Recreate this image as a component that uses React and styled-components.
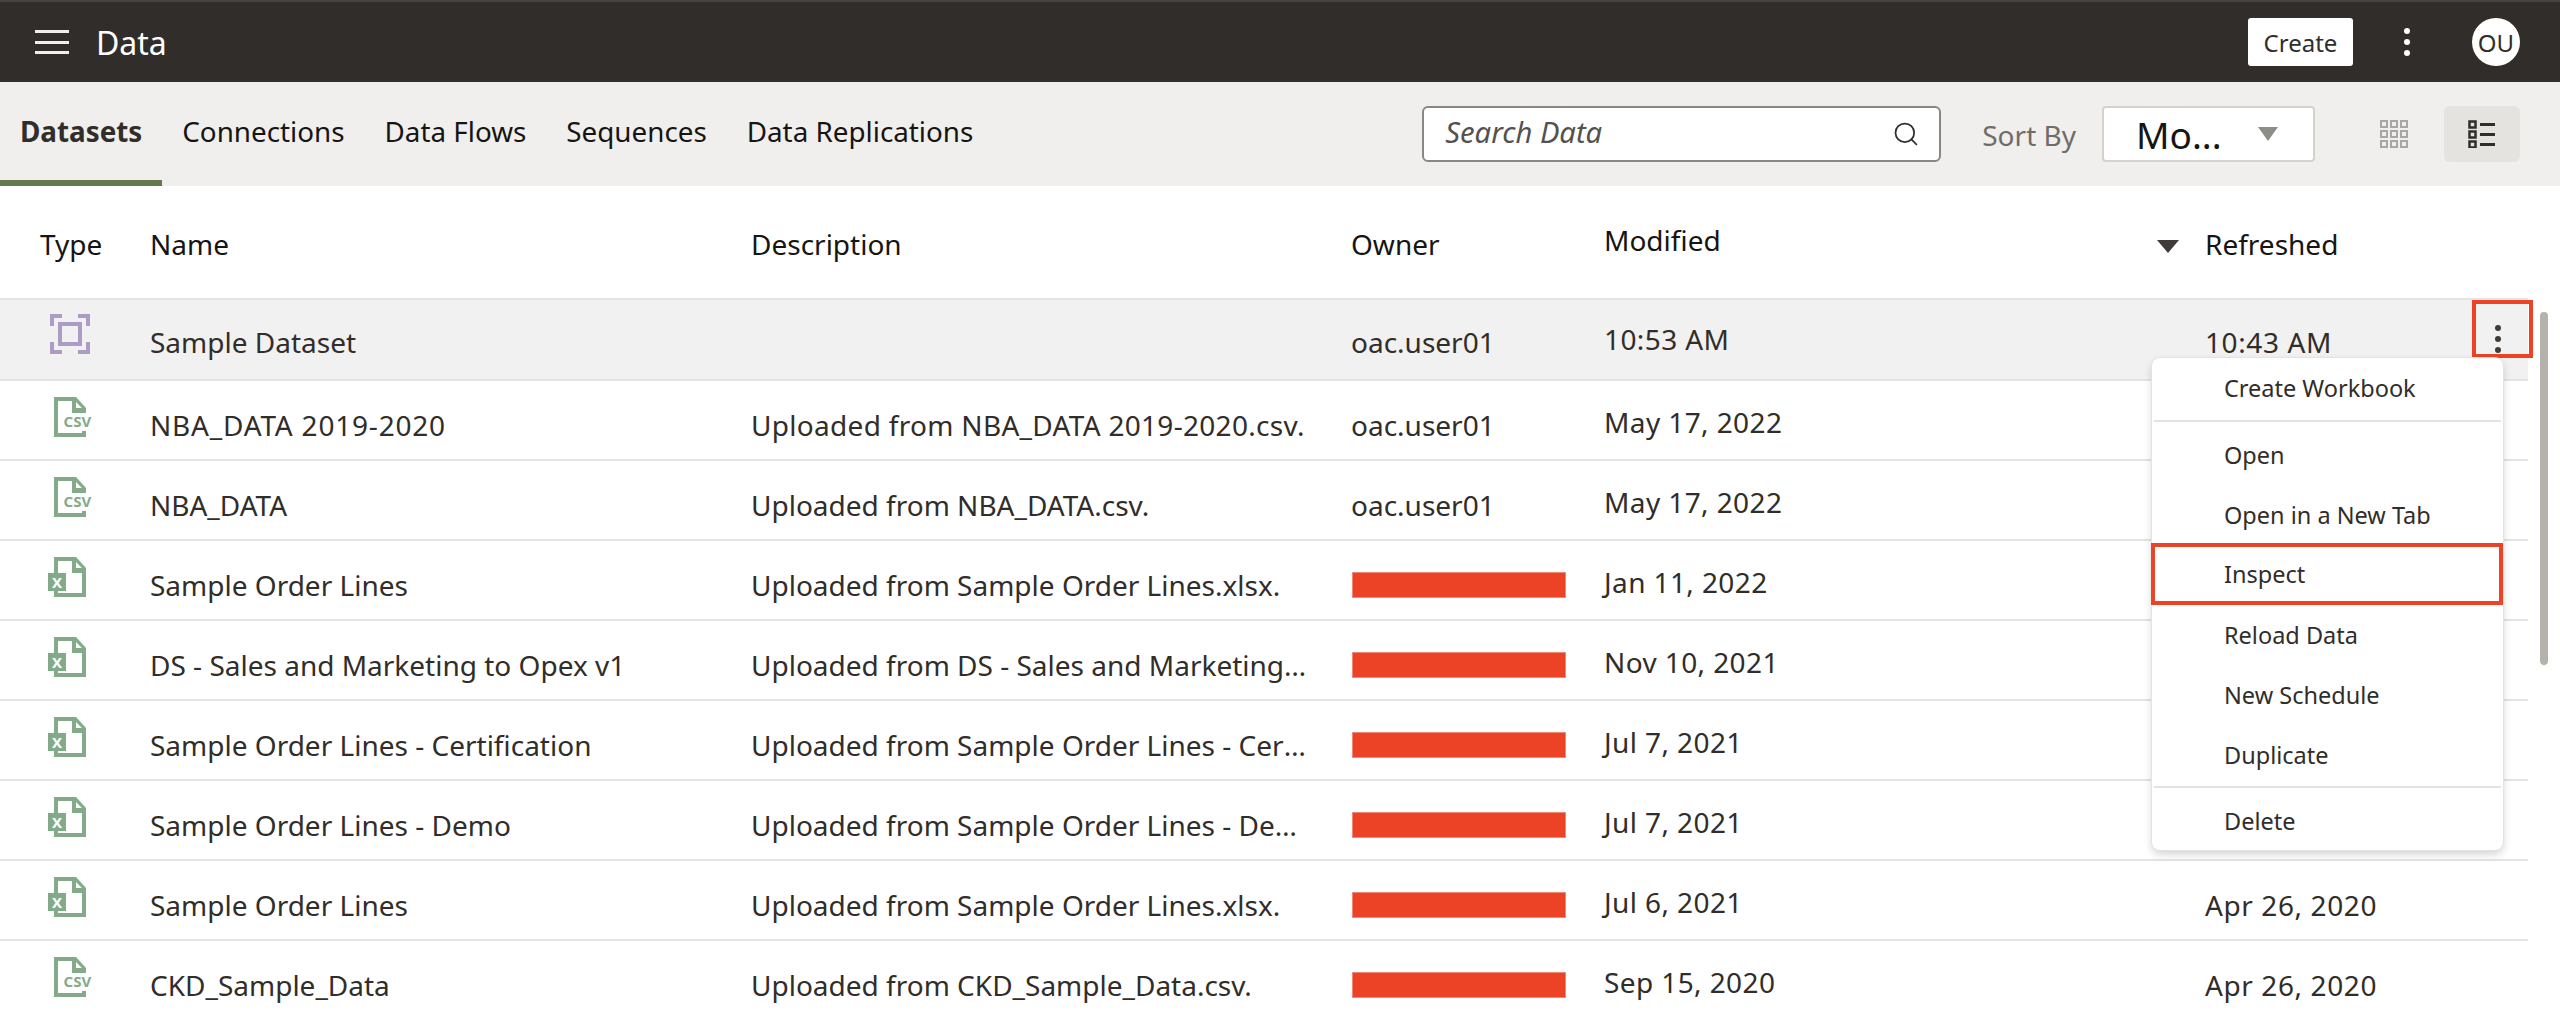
import React from "react";
import styled, { createGlobalStyle } from "styled-components";
import { Search } from "lucide-react";

const tabs = ["Datasets", "Connections", "Data Flows", "Sequences", "Data Replications"];

const rows = [
  { type: "dataset", name: "Sample Dataset", description: "", owner: "oac.user01", modified: "10:53 AM", refreshed: "10:43 AM", selected: true },
  { type: "csv", name: "NBA_DATA 2019-2020", description: "Uploaded from NBA_DATA 2019-2020.csv.", owner: "oac.user01", modified: "May 17, 2022", wide: true },
  { type: "csv", name: "NBA_DATA", description: "Uploaded from NBA_DATA.csv.", owner: "oac.user01", modified: "May 17, 2022" },
  { type: "xlsx", name: "Sample Order Lines", description: "Uploaded from Sample Order Lines.xlsx.", modified: "Jan 11, 2022" },
  { type: "xlsx", name: "DS - Sales and Marketing to Opex v1", description: "Uploaded from DS - Sales and Marketing to Opex v1.xlsx.", modified: "Nov 10, 2021" },
  { type: "xlsx", name: "Sample Order Lines - Certification", description: "Uploaded from Sample Order Lines - Certification.xlsx.", modified: "Jul 7, 2021" },
  { type: "xlsx", name: "Sample Order Lines - Demo", description: "Uploaded from Sample Order Lines - Demo.xlsx.", modified: "Jul 7, 2021" },
  { type: "xlsx", name: "Sample Order Lines", description: "Uploaded from Sample Order Lines.xlsx.", modified: "Jul 6, 2021", refreshed: "Apr 26, 2020" },
  { type: "csv", name: "CKD_Sample_Data", description: "Uploaded from CKD_Sample_Data.csv.", modified: "Sep 15, 2020", refreshed: "Apr 26, 2020" },
];

const menuGroups = [
  ["Create Workbook"],
  ["Open", "Open in a New Tab", "Inspect", "Reload Data", "New Schedule", "Duplicate"],
  ["Delete"],
];

const DatasetIcon = () => (
  <svg width="40" height="40" viewBox="0 0 40 40" fill="none" stroke="#ad9bc6" strokeWidth="4">
    <path d="M12 2H2V12M28 2H38V12M2 28V38H12M38 28V38H28" />
    <rect x="10" y="10" width="20" height="20" />
  </svg>
);

const CsvIcon = () => (
  <svg width="40" height="40" viewBox="-4 0 40 40" overflow="visible">
    <path
      fillRule="evenodd"
      fill="#83ab8a"
      d="M0 0H22L32 11V16H18V4H4V36H28V34H32V40H0ZM22 5V11H28Z"
    />
    <text x="9.5" y="30" fontSize="15" fontWeight="700" fill="#83ab8a" fontFamily="Noto Sans, sans-serif">
      CSV
    </text>
  </svg>
);

const XlsxIcon = () => (
  <svg width="40" height="40" viewBox="2 0 40 40" overflow="visible">
    <path
      fillRule="evenodd"
      fill="#83ab8a"
      d="M6 0H28L38 11V40H6V34H10V36H34V16H24V4H10V16H6ZM28 5V11H34Z"
    />
    <rect x="0" y="16" width="18" height="18" fill="#83ab8a" />
    <text x="9" y="30.5" fontSize="15" fontWeight="700" fill="#fff" textAnchor="middle" fontFamily="Noto Sans, sans-serif">
      X
    </text>
  </svg>
);

const typeIcons = { dataset: DatasetIcon, csv: CsvIcon, xlsx: XlsxIcon };

const GridIcon = () => (
  <svg width="28" height="28" viewBox="0 0 28 28" fill="none" stroke="#a9a7a3" strokeWidth="2">
    {[0, 10, 20].map((y) =>
      [0, 10, 20].map((x) => <rect key={`${x}-${y}`} x={x + 1} y={y + 1} width="6" height="6" />)
    )}
  </svg>
);

const ListIcon = () => (
  <svg width="28" height="28" viewBox="0 0 28 28" fill="none" stroke="#312d2a" strokeWidth="2.5">
    {[1, 11, 21].map((y) => (
      <React.Fragment key={y}>
        <rect x="1.5" y={y + 0.5} width="6" height="6" />
        <path d={`M12 ${y + 3.5}H27`} strokeWidth="3" />
      </React.Fragment>
    ))}
  </svg>
);

const Kebab = ({ color }) => (
  <svg width="8" height="30" viewBox="0 0 8 30" fill={color}>
    <circle cx="4" cy="4" r="3" />
    <circle cx="4" cy="15" r="3" />
    <circle cx="4" cy="26" r="3" />
  </svg>
);

export default function App() {
  return (
    <Page>
      <GlobalStyle />
      <Header>
        <Hamburger>
          <span />
          <span />
          <span />
        </Hamburger>
        <PageTitle>Data</PageTitle>
        <CreateButton>Create</CreateButton>
        <HeaderKebab>
          <Kebab color="#fff" />
        </HeaderKebab>
        <Avatar>OU</Avatar>
      </Header>

      <TabBar>
        <Tabs>
          {tabs.map((tab, index) => (
            <Tab key={tab} $active={index === 0}>
              {tab}
            </Tab>
          ))}
        </Tabs>
        <SearchBox>
          <SearchText>Search Data</SearchText>
          <Search size={28} strokeWidth={1.5} color="#312d2a" />
        </SearchBox>
        <SortLabel>Sort By</SortLabel>
        <SortSelect>
          <SortValue>Mo...</SortValue>
          <SortArrow />
        </SortSelect>
        <ViewButton>
          <GridIcon />
        </ViewButton>
        <ViewButton $active>
          <ListIcon />
        </ViewButton>
      </TabBar>

      <Content>
        <Table>
          <HeadRow>
            <HeadCell>Type</HeadCell>
            <HeadCell>Name</HeadCell>
            <HeadCell>Description</HeadCell>
            <HeadCell>Owner</HeadCell>
            <HeadCell $raised>
              Modified
              <SortMark />
            </HeadCell>
            <HeadCell>Refreshed</HeadCell>
          </HeadRow>
          {rows.map((row, index) => {
            const Icon = typeIcons[row.type];
            return (
              <Row key={index} $selected={row.selected}>
                <IconCell>
                  <Icon />
                </IconCell>
                <Cell $tracking={row.wide ? 0.8 : 0}>{row.name}</Cell>
                <Cell $tracking={row.wide ? 0.3 : 0}>
                  <Ellipsis>{row.description}</Ellipsis>
                </Cell>
                <Cell>{row.owner ? row.owner : <Redaction />}</Cell>
                <Cell $raised $tracking={0.4}>
                  {row.modified}
                </Cell>
                <Cell $tracking={0.6}>{row.refreshed}</Cell>
                {row.selected && (
                  <RowAction>
                    <Kebab color="#3f3b38" />
                  </RowAction>
                )}
              </Row>
            );
          })}
          <Menu>
            {menuGroups.map((group, index) => (
              <MenuGroup key={index} $first={index === 0}>
                {group.map((item) => (
                  <MenuItem key={item} $highlighted={item === "Inspect"}>
                    {item}
                  </MenuItem>
                ))}
              </MenuGroup>
            ))}
          </Menu>
        </Table>
        <ScrollTrack>
          <ScrollThumb />
        </ScrollTrack>
      </Content>
    </Page>
  );
}

const GlobalStyle = createGlobalStyle`
  body {
    margin: 0;
    background: #fff;
    font-family: "Noto Sans", "Open Sans", sans-serif;
    color: #312d2a;
  }
`;

const Page = styled.div`
  width: 2560px;
  height: 1018px;
  overflow: hidden;
  display: flex;
  flex-direction: column;
`;

const Header = styled.div`
  height: 80px;
  flex: none;
  border-top: 2px solid #454442;
  background: #312d2a;
  display: flex;
  align-items: center;
  padding: 0 40px 0 35px;
  color: #fff;
`;

const Hamburger = styled.div`
  width: 34px;
  height: 24px;
  display: flex;
  flex-direction: column;
  justify-content: space-between;
  margin-right: 27px;
  span {
    height: 3px;
    background: #f1efed;
  }
`;

const PageTitle = styled.div`
  font-size: 32px;
  flex: 1;
`;

const CreateButton = styled.div`
  width: 105px;
  height: 48px;
  background: #fff;
  color: #312d2a;
  border-radius: 3px;
  font-size: 24px;
  display: flex;
  align-items: center;
  justify-content: center;
`;

const HeaderKebab = styled.div`
  width: 119px;
  padding-right: 12px;
  box-sizing: border-box;
  display: flex;
  justify-content: center;
`;

const Avatar = styled.div`
  width: 48px;
  height: 48px;
  border-radius: 50%;
  background: #fff;
  color: #312d2a;
  font-size: 24px;
  display: flex;
  align-items: center;
  justify-content: center;
`;

const TabBar = styled.div`
  height: 104px;
  flex: none;
  background: #f0efed;
  display: flex;
  align-items: center;
  padding-right: 40px;
`;

const Tabs = styled.div`
  display: flex;
  align-self: stretch;
  flex: 1;
`;

const Tab = styled.div`
  display: flex;
  align-items: center;
  padding: 0 20px 6px;
  font-size: 27.8px;
  font-weight: ${({ $active }) => ($active ? 700 : 400)};
  color: ${({ $active }) => ($active ? "#312d2a" : "#161513")};
  box-shadow: ${({ $active }) => ($active ? "inset 0 -6px 0 #65784f" : "none")};
`;

const SearchBox = styled.div`
  width: 519px;
  height: 56px;
  box-sizing: border-box;
  background: #fff;
  border: 2px solid #8a8782;
  border-radius: 6px;
  padding: 0 19px 0 21px;
  display: flex;
  align-items: center;
  justify-content: space-between;
`;

const SearchText = styled.span`
  font-size: 29.2px;
  font-style: italic;
  color: #54514e;
  margin-bottom: 5px;
`;

const SortLabel = styled.div`
  font-size: 28px;
  color: #6f6c69;
  margin: 2px 26px 0 41px;
`;

const SortSelect = styled.div`
  width: 213px;
  height: 56px;
  box-sizing: border-box;
  background: #fff;
  border: 2px solid #d4d2cd;
  border-radius: 4px;
  padding: 0 35px 0 32px;
  display: flex;
  align-items: center;
  justify-content: space-between;
`;

const SortValue = styled.span`
  font-size: 37px;
  color: #161513;
`;

const SortArrow = styled.span`
  width: 0;
  height: 0;
  border-left: 10px solid transparent;
  border-right: 10px solid transparent;
  border-top: 14px solid #8f8d89;
`;

const ViewButton = styled.div`
  width: 76px;
  height: 56px;
  border-radius: 6px;
  background: ${({ $active }) => ($active ? "#e4e3df" : "transparent")};
  display: flex;
  align-items: center;
  justify-content: center;
  margin-left: ${({ $active }) => ($active ? "12px" : "41px")};
`;

const Content = styled.div`
  flex: 1;
  min-height: 0;
  display: flex;
`;

const Table = styled.div`
  position: relative;
  width: 2528px;
  flex: none;
`;

const HeadRow = styled.div`
  height: 114px;
  box-sizing: border-box;
  border-bottom: 2px solid #e1e5e8;
  padding-left: 40px;
  display: grid;
  grid-template-columns: 110px 601px 600px 253px 601px 1fr;
  align-items: center;
`;

const HeadCell = styled.div`
  position: relative;
  font-size: 28px;
  color: #161513;
  margin-top: ${({ $raised }) => ($raised ? "0" : "4px")};
  margin-bottom: ${({ $raised }) => ($raised ? "4px" : "0")};
`;

const SortMark = styled.span`
  position: absolute;
  right: 26px;
  top: 19px;
  width: 0;
  height: 0;
  border-left: 11px solid transparent;
  border-right: 11px solid transparent;
  border-top: 13px solid #3f3b38;
`;

const Row = styled.div`
  position: relative;
  height: ${({ $selected }) => ($selected ? "81px" : "80px")};
  box-sizing: border-box;
  border-bottom: 2px solid #e3e3e1;
  padding-bottom: ${({ $selected }) => ($selected ? "5px" : "0")};
  background: ${({ $selected }) => ($selected ? "#f1f1f1" : "#fff")};
  display: grid;
  grid-template-columns: 150px 601px 600px 253px 601px 1fr;
  align-items: center;
`;

const IconCell = styled.div`
  display: flex;
  justify-content: center;
  width: 140px;
  margin-bottom: 6px;
`;

const Cell = styled.div`
  font-size: 28px;
  color: #312d2a;
  min-width: 0;
  letter-spacing: ${({ $tracking }) => $tracking || 0}px;
  margin-top: ${({ $raised }) => ($raised ? "4px" : "10px")};
`;

const Ellipsis = styled.div`
  max-width: 556px;
  white-space: nowrap;
  overflow: hidden;
  text-overflow: ellipsis;
`;

const Redaction = styled.div`
  width: 214px;
  height: 26px;
  box-sizing: border-box;
  margin-left: 1px;
  background: #ec4226;
  border: 1px solid #f28873;
`;

const RowAction = styled.div`
  position: absolute;
  left: 2472px;
  top: 0;
  width: 61px;
  height: 58px;
  box-sizing: border-box;
  border: 4px solid #ec4226;
  display: flex;
  justify-content: center;
  align-items: center;
  padding: 20px 10px 0 0;
`;

const Menu = styled.div`
  position: absolute;
  left: 2152px;
  top: 172px;
  width: 351px;
  height: 492px;
  box-sizing: border-box;
  background: #fff;
  border-radius: 8px;
  box-shadow: 0 0 0 1px #e4e3df, 0 4px 8px rgba(0, 0, 0, 0.18);
  padding: 0 2px;
`;

const MenuGroup = styled.div`
  border-top: ${({ $first }) => ($first ? "0" : "2px solid #e4e3df")};
  padding-top: ${({ $first }) => ($first ? "0" : "3px")};
  margin-bottom: ${({ $first }) => ($first ? "2px" : "1px")};
`;

const MenuItem = styled.div`
  height: 60px;
  box-sizing: border-box;
  padding-left: 70px;
  display: flex;
  align-items: center;
  font-size: 23.5px;
  color: #312d2a;
  ${({ $highlighted }) =>
    $highlighted &&
    `
    height: 62px;
    margin: -2px -2px 0 -3px;
    padding: 0 0 0 69px;
    border: 4px solid #ec4226;
  `}
`;

const ScrollTrack = styled.div`
  flex: 1;
  padding: 126px 0 0 12px;
`;

const ScrollThumb = styled.div`
  width: 8px;
  height: 353px;
  border-radius: 4px;
  background: #b5b1ab;
`;
